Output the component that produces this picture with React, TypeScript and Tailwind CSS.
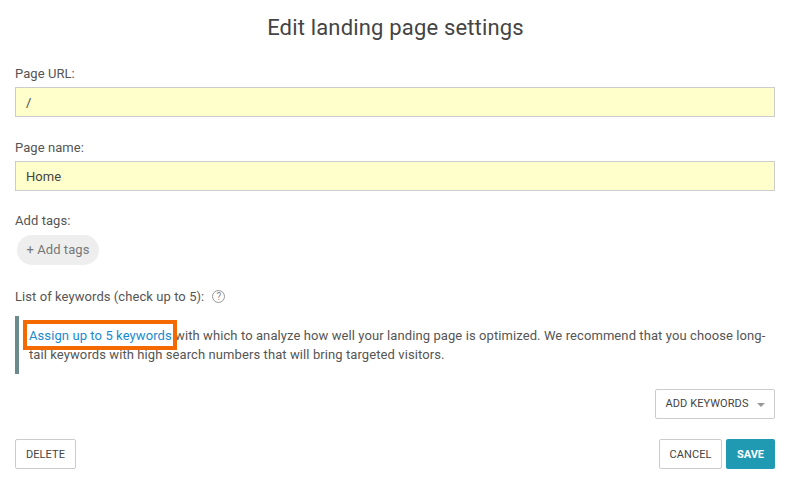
function Field({ label, value }: { label: string; value: string }) {
  return (
    <div className="flex flex-col">
      <label className="h-[23px] text-[13px] leading-[19px] tracking-[0.07px] text-[#555]">{label}</label>
      <input
        readOnly
        value={value}
        className="h-[30px] border border-[#ccc] bg-[#ffc] px-[10px] text-[13px] tracking-[0.07px] text-[#444] outline-none"
      />
    </div>
  );
}

export default function App() {
  return (
    <div className="h-[487px] w-[792px] overflow-hidden bg-white pr-[17px] pl-[15px] font-['Roboto',sans-serif]">
      <h1 className="pt-[13px] pl-[1px] text-center text-[22px] leading-[30px] font-normal tracking-[0.17px] text-[#444]">
        Edit landing page settings
      </h1>

      <div className="mt-[21px] flex flex-col gap-[21px]">
        <Field label="Page URL:" value="/" />
        <Field label="Page name:" value="Home" />
      </div>

      <p className="mt-[20px] h-[24px] text-[13px] leading-[19px] tracking-[0.07px] text-[#555]">Add tags:</p>
      <button className="ml-[2px] block h-[30px] w-[82px] rounded-full bg-[#eee] text-[13px] tracking-[0.07px] text-[#777]">
        + Add tags
      </button>

      <div className="mt-[22px] flex h-[19px] items-center gap-[8px] text-[13px] tracking-[0.07px] text-[#555]">
        <span>List of keywords (check up to 5):</span>
        <span className="flex h-[13px] w-[13px] items-center justify-center rounded-full border border-[#999] text-[10px] leading-none text-[#888]">
          ?
        </span>
      </div>

      <div className="relative mt-[10px] h-[58px] border-l-4 border-[#6b8a8c] pt-[10px] pl-[10px] text-[13px] leading-[19px] tracking-[0.09px] text-[#555]">
        <p>
          <a className="text-[#1a8ad0]">Assign up to 5 keywords</a> with which to analyze how well your landing page is optimized. We recommend that you choose long-tail keywords with high search numbers that will bring targeted visitors.
        </p>
        <div className="absolute top-[4px] left-[4px] h-[30px] w-[154px] border-4 border-[#f56a00]" />
      </div>

      <div className="mt-[15px] flex justify-end">
        <button className="flex h-[30px] w-[120px] items-center justify-center gap-[8px] rounded-[2px] border border-[#ccc] bg-white pt-[1px] text-[11px] tracking-[0.08px] text-[#444]">
          ADD KEYWORDS
          <span className="h-0 w-0 border-x-[4px] border-t-[4px] border-x-transparent border-t-[#999]" />
        </button>
      </div>

      <div className="mt-[20px] flex items-center">
        <button className="h-[30px] w-[61px] rounded-[2px] border border-[#ccc] bg-white pt-[2px] text-[11px] tracking-[0.08px] text-[#444]">
          DELETE
        </button>
        <div className="ml-auto flex gap-[4px]">
          <button className="h-[30px] w-[63px] rounded-[2px] border border-[#ccc] bg-white pt-[2px] text-[11px] tracking-[0.08px] text-[#444]">
            CANCEL
          </button>
          <button className="h-[30px] w-[49px] rounded-[2px] bg-[#1f9ab2] pt-[2px] text-[11px] font-bold text-white">
            SAVE
          </button>
        </div>
      </div>
    </div>
  );
}
